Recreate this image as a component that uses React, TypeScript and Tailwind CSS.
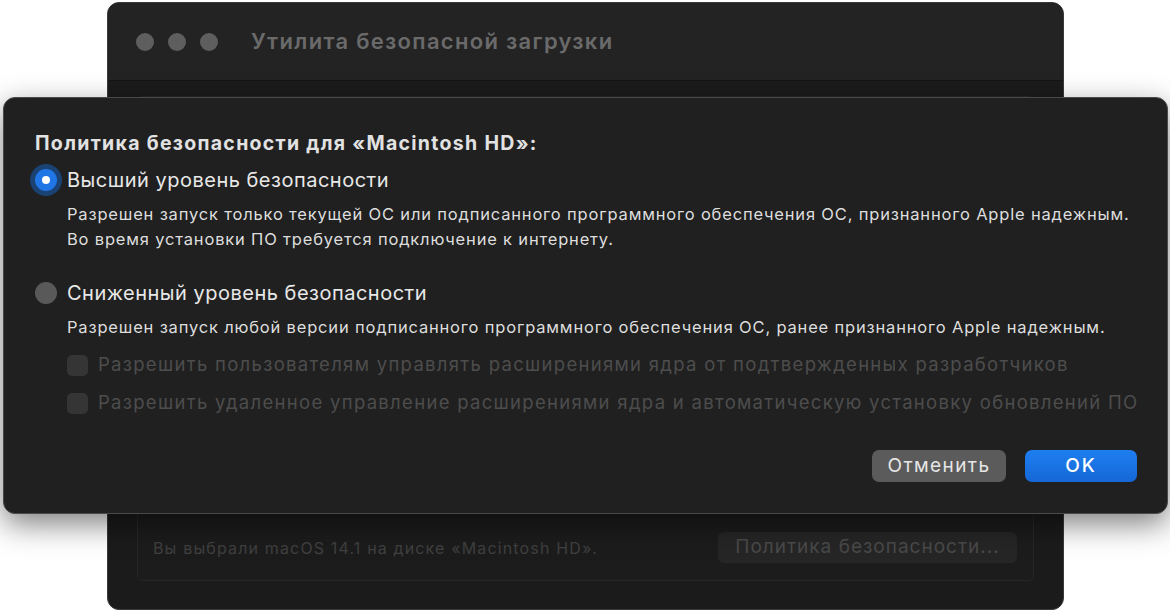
import React from "react";

const font = { fontFamily: "Inter, 'Noto Sans', 'Liberation Sans', sans-serif" };

function TrafficLights() {
  return (
    <div className="flex items-center gap-[14px]">
      {[0, 1, 2].map((i) => (
        <span key={i} className="block w-[18px] h-[18px] rounded-full bg-[#5e5e5e]" />
      ))}
    </div>
  );
}

function BackWindow() {
  return (
    <div className="absolute left-[107px] top-[2px] w-[957px] h-[608px] rounded-[12px] overflow-hidden border border-[#3a3a3a] bg-[#1b1b1b] flex flex-col">
      <div className="h-[78px] shrink-0 flex items-center pl-[28px] bg-[#232323] border-b border-[#141414]">
        <TrafficLights />
        <span className="ml-[33px] text-[22px] font-semibold text-[#6a6a6a] tracking-[1.3px]">
          Утилита безопасной загрузки
        </span>
      </div>
      <div className="flex-1 flex flex-col px-[29px] pt-[15px] pb-[28px]">
        <div className="flex-1 rounded-[6px] border border-[#272727] bg-[#1c1c1c] flex items-end">
          <div className="w-full flex items-center justify-between pl-[15px] pr-[16px] pb-[17px]">
            <span className="text-[16px] tracking-[1.15px] text-[#404040]">Вы выбрали macOS 14.1 на диске «Macintosh HD».</span>
            <span className="h-[31px] w-[299px] rounded-[6px] bg-[#262626] flex items-center justify-center text-[19px] tracking-[1px] text-[#4a4a4a]">
              Политика безопасности...
            </span>
          </div>
        </div>
      </div>
    </div>
  );
}

function Radio({ checked }: { checked: boolean }) {
  if (checked) {
    return (
      <span className="shrink-0 w-[32px] h-[32px] rounded-full bg-[#1a4272] flex items-center justify-center">
        <span className="w-[22px] h-[22px] rounded-full bg-[#1f76e4] flex items-center justify-center">
          <span className="w-[8px] h-[8px] rounded-full bg-white" />
        </span>
      </span>
    );
  }
  return (
    <span className="shrink-0 w-[32px] h-[32px] flex items-center justify-center">
      <span className="w-[22px] h-[22px] rounded-full bg-[#595959]" />
    </span>
  );
}

function Checkbox({ label }: { label: string }) {
  return (
    <div className="flex items-center h-[26px]">
      <span className="shrink-0 w-[21px] h-[21px] rounded-[5px] bg-[#353535]" />
      <span className="ml-[10px] whitespace-nowrap text-[18.5px] tracking-[1.3px] text-[#4d4d4d]">{label}</span>
    </div>
  );
}

function PolicySheet() {
  return (
    <div className="absolute left-[3px] top-[97px] w-[1165px] h-[417px] rounded-[12px] bg-[#202020] border border-[#4a4a4a] shadow-[0_10px_30px_rgba(0,0,0,0.5)] flex flex-col pl-[31px] pr-[30px] pt-[33px] pb-[31px]">
      <div className="text-[19.5px] leading-[24px] font-bold tracking-[1.3px] text-[#e2e2e2]">
        Политика безопасности для «Macintosh HD»:
      </div>

      <div className="mt-[9px] flex items-center -ml-[5px]">
        <Radio checked />
        <span className="ml-[5px] text-[20px] leading-[26px] tracking-[0.5px] text-[#e8e8e8]">Высший уровень безопасности</span>
      </div>
      <div className="mt-[6px] pl-[32px] text-[16.5px] leading-[25px] tracking-[0.82px] text-[#dedede]">
        <div>Разрешен запуск только текущей ОС или подписанного программного обеспечения ОС, признанного Apple надежным.</div>
        <div>Во время установки ПО требуется подключение к интернету.</div>
      </div>

      <div className="mt-[25px] flex items-center -ml-[5px]">
        <Radio checked={false} />
        <span className="ml-[5px] text-[20px] leading-[26px] tracking-[0.5px] text-[#e8e8e8]">Сниженный уровень безопасности</span>
      </div>
      <div className="mt-[6px] pl-[32px] text-[16.5px] leading-[25px] tracking-[0.82px] text-[#dedede]">
        Разрешен запуск любой версии подписанного программного обеспечения ОС, ранее признанного Apple надежным.
      </div>

      <div className="mt-[12px] pl-[32px] flex flex-col gap-[12px]">
        <Checkbox label="Разрешить пользователям управлять расширениями ядра от подтвержденных разработчиков" />
        <Checkbox label="Разрешить удаленное управление расширениями ядра и автоматическую установку обновлений ПО" />
      </div>

      <div className="mt-auto flex justify-end gap-[19px]">
        <button className="h-[32px] w-[134px] rounded-[7px] bg-[#5b5b5b] text-[19px] tracking-[1.4px] text-[#e6e6e6]">
          Отменить
        </button>
        <button className="h-[32px] w-[112px] rounded-[7px] bg-gradient-to-b from-[#1e7ff0] to-[#1667d6] text-[19px] font-medium tracking-[2px] text-white">
          OK
        </button>
      </div>
    </div>
  );
}

export default function App() {
  return (
    <div className="relative w-[1170px] h-[612px] bg-white overflow-hidden" style={font}>
      <BackWindow />
      <PolicySheet />
    </div>
  );
}
